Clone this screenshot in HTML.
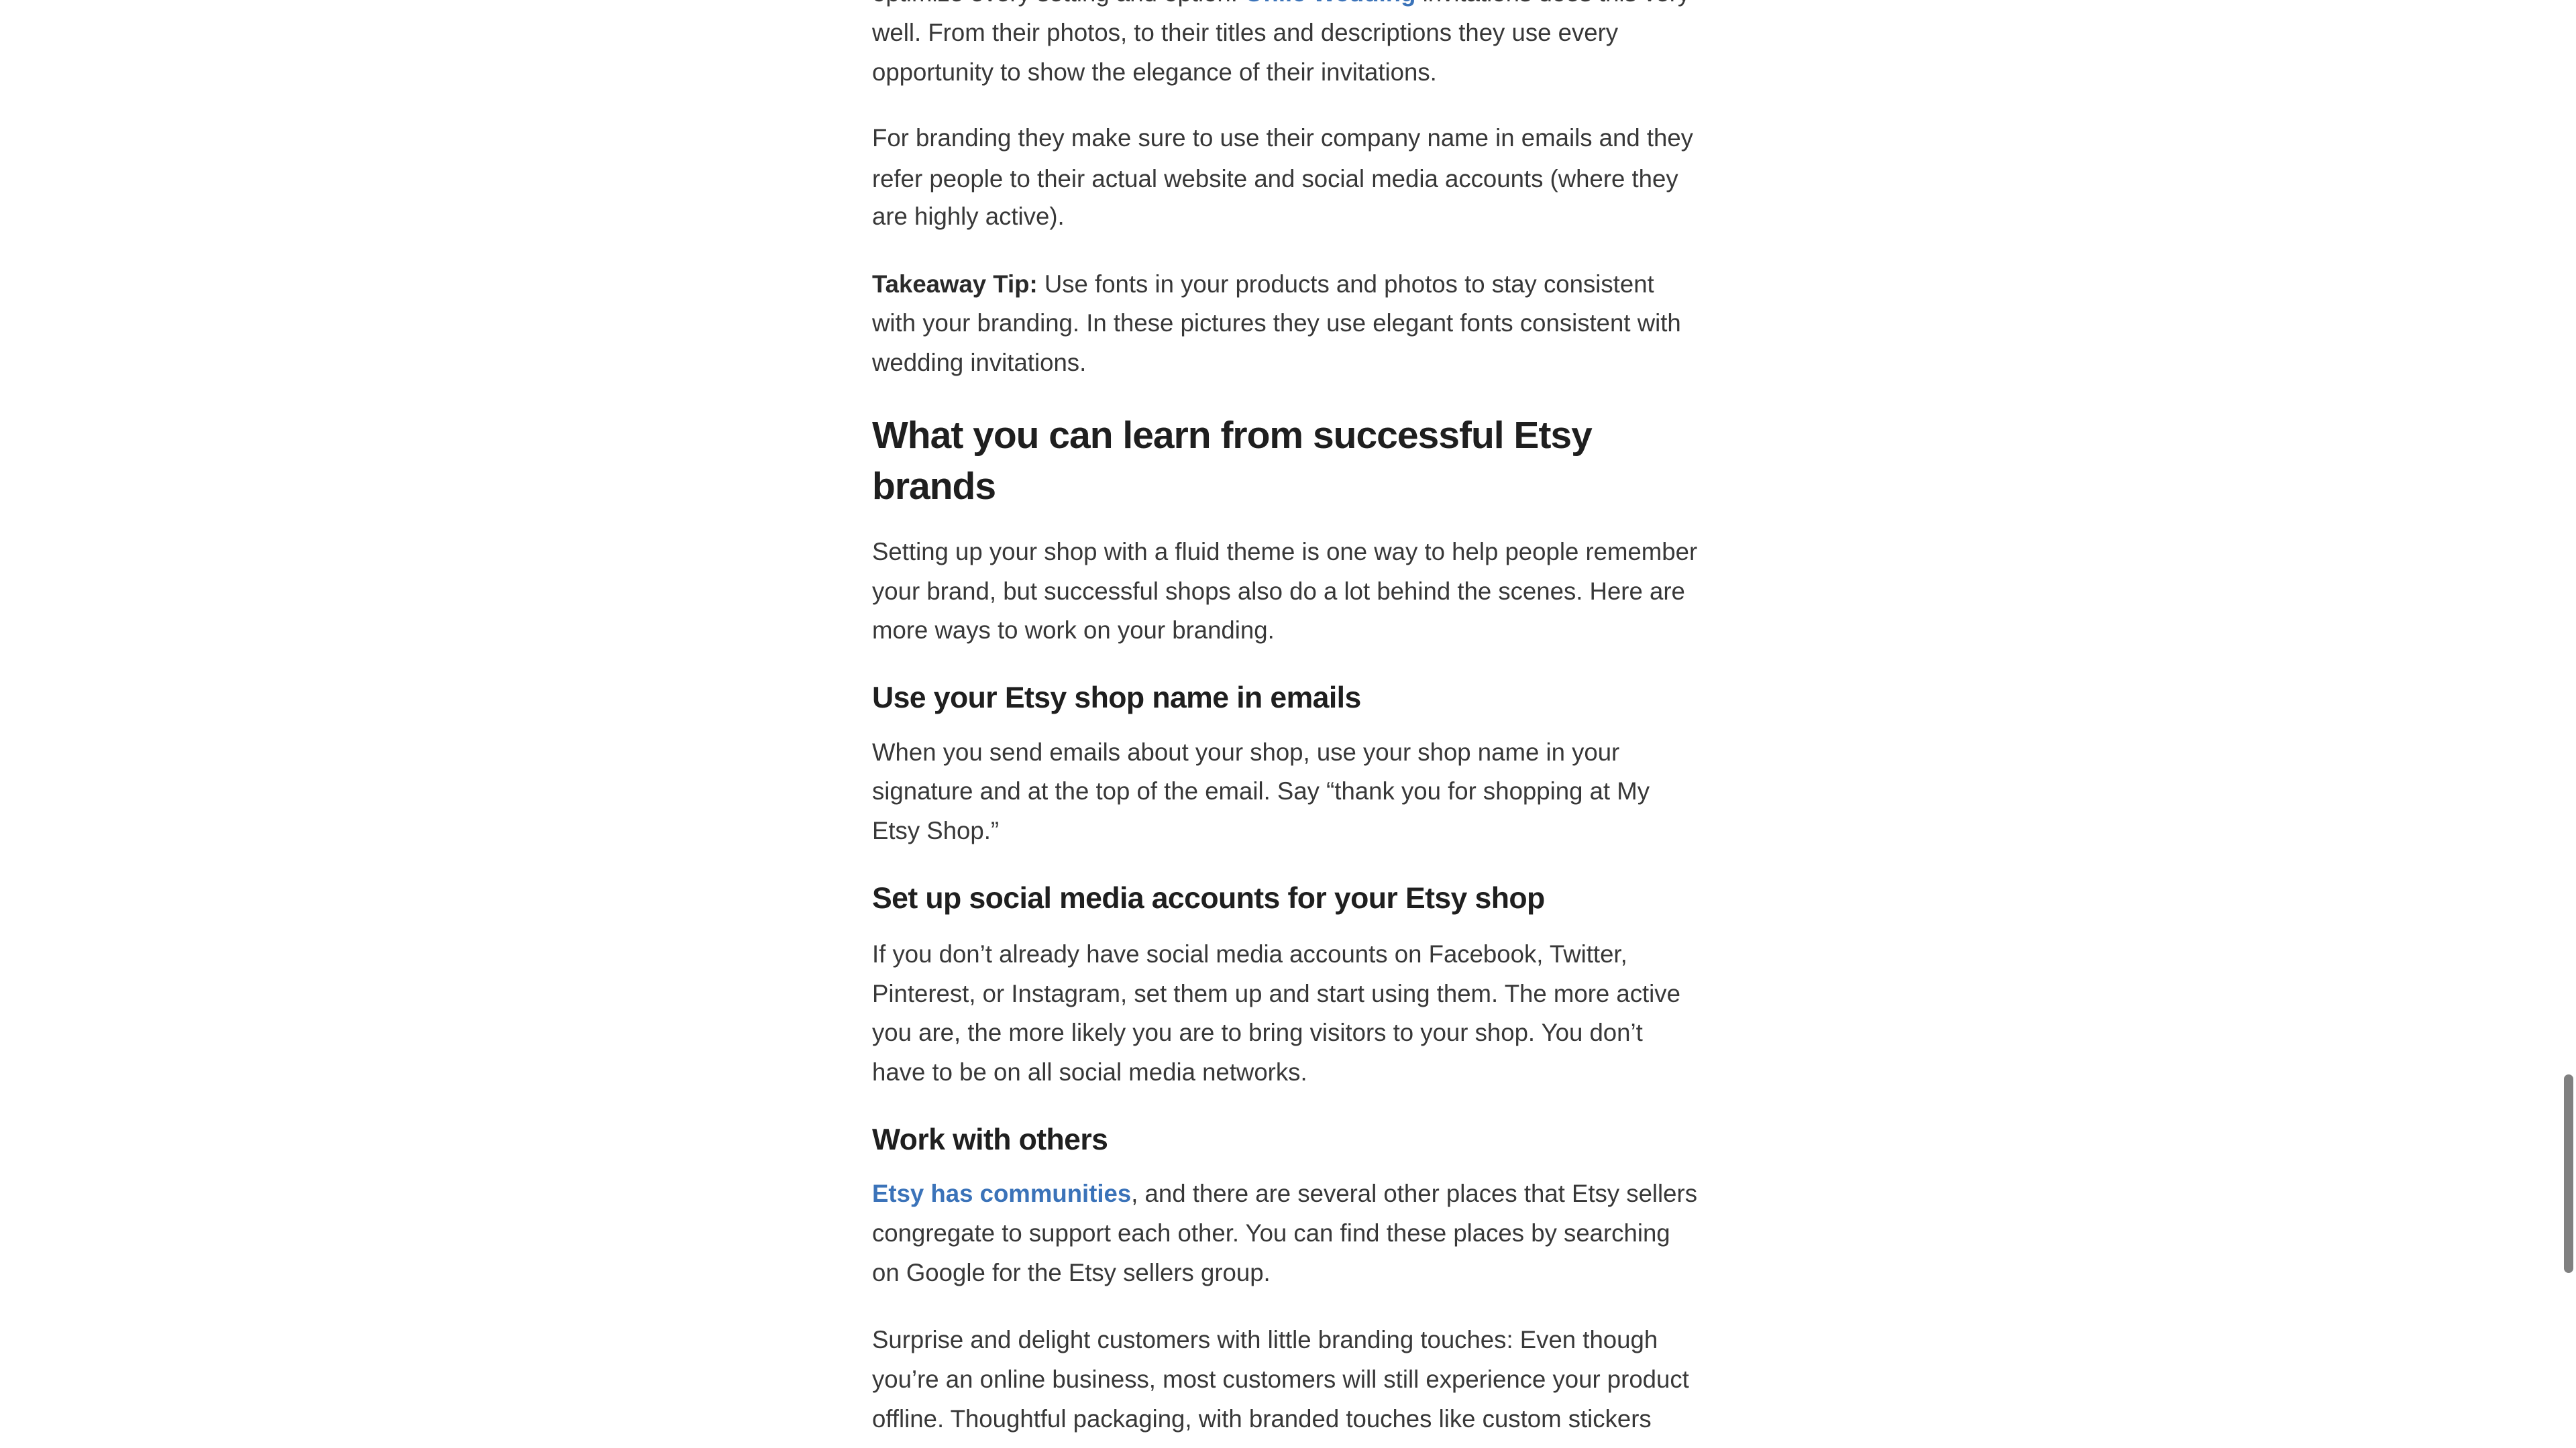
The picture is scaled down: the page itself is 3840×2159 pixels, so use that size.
<!DOCTYPE html>
<html><head><meta charset="utf-8"><style>
html,body{margin:0;padding:0;background:#fff;}
body{width:3840px;height:2159px;position:relative;overflow:hidden;font-family:"Liberation Sans",sans-serif;color:#383838;}
.l{position:absolute;left:1300px;white-space:nowrap;font-size:36.6px;line-height:58px;height:58px;letter-spacing:0;}
.h2{position:absolute;left:1300px;white-space:nowrap;font-size:57px;font-weight:bold;color:#1f1f1f;line-height:76px;letter-spacing:-1px;}
.h3{position:absolute;left:1300px;white-space:nowrap;font-size:44.6px;font-weight:bold;color:#1f1f1f;line-height:60px;letter-spacing:-0.6px;}
a{color:#3b73b9;font-weight:bold;text-decoration:none;}
b{color:#2a2a2a;}
.sb{position:absolute;left:3822px;top:1602px;width:14px;height:296px;border-radius:7px;background:#808080;}
</style></head><body>
<div class="l" style="top:-39px">optimize every setting and option. <a>Onlie Wedding</a> invitations does this very</div>
<div class="l" style="top:20px">well. From their photos, to their titles and descriptions they use every</div>
<div class="l" style="top:79px">opportunity to show the elegance of their invitations.</div>

<div class="l" style="top:177px">For branding they make sure to use their company name in emails and they</div>
<div class="l" style="top:238px">refer people to their actual website and social media accounts (where they</div>
<div class="l" style="top:294px">are highly active).</div>

<div class="l" style="top:395px"><b>Takeaway Tip:</b> Use fonts in your products and photos to stay consistent</div>
<div class="l" style="top:453px">with your branding. In these pictures they use elegant fonts consistent with</div>
<div class="l" style="top:512px">wedding invitations.</div>

<div class="h2" style="top:611px">What you can learn from successful Etsy</div>
<div class="h2" style="top:687px">brands</div>

<div class="l" style="top:794px">Setting up your shop with a fluid theme is one way to help people remember</div>
<div class="l" style="top:853px">your brand, but successful shops also do a lot behind the scenes. Here are</div>
<div class="l" style="top:911px">more ways to work on your branding.</div>

<div class="h3" style="top:1011px">Use your Etsy shop name in emails</div>

<div class="l" style="top:1093px">When you send emails about your shop, use your shop name in your</div>
<div class="l" style="top:1151px">signature and at the top of the email. Say “thank you for shopping at My</div>
<div class="l" style="top:1210px">Etsy Shop.”</div>

<div class="h3" style="top:1310px">Set up social media accounts for your Etsy shop</div>

<div class="l" style="top:1394px">If you don’t already have social media accounts on Facebook, Twitter,</div>
<div class="l" style="top:1453px">Pinterest, or Instagram, set them up and start using them. The more active</div>
<div class="l" style="top:1511px">you are, the more likely you are to bring visitors to your shop. You don’t</div>
<div class="l" style="top:1570px">have to be on all social media networks.</div>

<div class="h3" style="top:1670px">Work with others</div>

<div class="l" style="top:1751px"><a>Etsy has communities</a>, and there are several other places that Etsy sellers</div>
<div class="l" style="top:1810px">congregate to support each other. You can find these places by searching</div>
<div class="l" style="top:1869px">on Google for the Etsy sellers group.</div>

<div class="l" style="top:1969px">Surprise and delight customers with little branding touches: Even though</div>
<div class="l" style="top:2028px">you’re an online business, most customers will still experience your product</div>
<div class="l" style="top:2087px">offline. Thoughtful packaging, with branded touches like custom stickers</div>

<div class="sb"></div>
</body></html>
